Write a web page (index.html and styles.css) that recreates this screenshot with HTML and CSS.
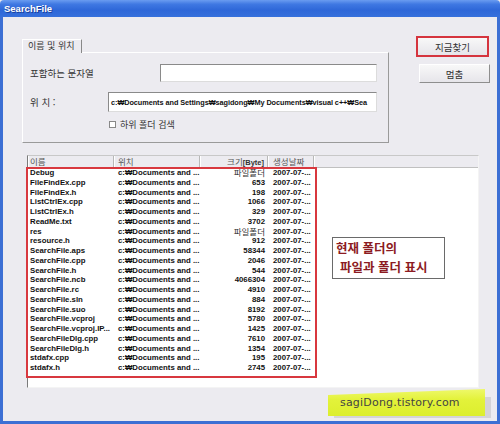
FILE: index.html
```html
<!DOCTYPE html>
<html lang="ko">
<head>
<meta charset="utf-8">
<title>SearchFile</title>
<link rel="stylesheet" href="styles.css">
</head>
<body>
<div class="window">
  <div class="titlebar"><span class="title">SearchFile</span></div>
  <div class="client">
    <div class="top">
      <div class="tabgroup">
        <div class="tabs"><div class="tab">이름 및 위치</div></div>
        <div class="panel">
          <div class="row row1">
            <span class="label">포함하는 문자열</span>
            <div class="input input1"></div>
          </div>
          <div class="row row2">
            <span class="label">위 치 :</span>
            <div class="input input2"><span class="path">c:₩Documents and Settings₩sagidong₩My Documents₩visual c++₩Sea</span></div>
          </div>
          <div class="row row3">
            <span class="check"></span><span class="label">하위 폴더 검색</span>
          </div>
        </div>
      </div>
      <div class="buttons">
        <div class="btn btn-find">지금찾기</div>
        <div class="btn btn-stop">멈춤</div>
      </div>
    </div>

    <div class="list">
      <div class="header">
        <div class="hcell c-name">이름</div>
        <div class="hcell c-loc">위치</div>
        <div class="hcell c-size">크기<b>[Byte]</b></div>
        <div class="hcell c-date">생성날짜</div>
        <div class="hcell c-rest"></div>
      </div>
      <div class="rows">
        <div class="r"><span class="c-name">Debug</span><span class="c-loc">c:₩Documents and ...</span><span class="c-size ko">파일폴더</span><span class="c-date">2007-07-...</span></div>
        <div class="r"><span class="c-name">FileFindEx.cpp</span><span class="c-loc">c:₩Documents and ...</span><span class="c-size">653</span><span class="c-date">2007-07-...</span></div>
        <div class="r"><span class="c-name">FileFindEx.h</span><span class="c-loc">c:₩Documents and ...</span><span class="c-size">198</span><span class="c-date">2007-07-...</span></div>
        <div class="r"><span class="c-name">ListCtrlEx.cpp</span><span class="c-loc">c:₩Documents and ...</span><span class="c-size">1066</span><span class="c-date">2007-07-...</span></div>
        <div class="r"><span class="c-name">ListCtrlEx.h</span><span class="c-loc">c:₩Documents and ...</span><span class="c-size">329</span><span class="c-date">2007-07-...</span></div>
        <div class="r"><span class="c-name">ReadMe.txt</span><span class="c-loc">c:₩Documents and ...</span><span class="c-size">3702</span><span class="c-date">2007-07-...</span></div>
        <div class="r"><span class="c-name">res</span><span class="c-loc">c:₩Documents and ...</span><span class="c-size ko">파일폴더</span><span class="c-date">2007-07-...</span></div>
        <div class="r"><span class="c-name">resource.h</span><span class="c-loc">c:₩Documents and ...</span><span class="c-size">912</span><span class="c-date">2007-07-...</span></div>
        <div class="r"><span class="c-name">SearchFile.aps</span><span class="c-loc">c:₩Documents and ...</span><span class="c-size">58344</span><span class="c-date">2007-07-...</span></div>
        <div class="r"><span class="c-name">SearchFile.cpp</span><span class="c-loc">c:₩Documents and ...</span><span class="c-size">2046</span><span class="c-date">2007-07-...</span></div>
        <div class="r"><span class="c-name">SearchFile.h</span><span class="c-loc">c:₩Documents and ...</span><span class="c-size">544</span><span class="c-date">2007-07-...</span></div>
        <div class="r"><span class="c-name">SearchFile.ncb</span><span class="c-loc">c:₩Documents and ...</span><span class="c-size">4066304</span><span class="c-date">2007-07-...</span></div>
        <div class="r"><span class="c-name">SearchFile.rc</span><span class="c-loc">c:₩Documents and ...</span><span class="c-size">4910</span><span class="c-date">2007-07-...</span></div>
        <div class="r"><span class="c-name">SearchFile.sln</span><span class="c-loc">c:₩Documents and ...</span><span class="c-size">884</span><span class="c-date">2007-07-...</span></div>
        <div class="r"><span class="c-name">SearchFile.suo</span><span class="c-loc">c:₩Documents and ...</span><span class="c-size">8192</span><span class="c-date">2007-07-...</span></div>
        <div class="r"><span class="c-name">SearchFile.vcproj</span><span class="c-loc">c:₩Documents and ...</span><span class="c-size">5780</span><span class="c-date">2007-07-...</span></div>
        <div class="r"><span class="c-name">SearchFile.vcproj.IP...</span><span class="c-loc">c:₩Documents and ...</span><span class="c-size">1425</span><span class="c-date">2007-07-...</span></div>
        <div class="r"><span class="c-name">SearchFileDlg.cpp</span><span class="c-loc">c:₩Documents and ...</span><span class="c-size">7610</span><span class="c-date">2007-07-...</span></div>
        <div class="r"><span class="c-name">SearchFileDlg.h</span><span class="c-loc">c:₩Documents and ...</span><span class="c-size">1354</span><span class="c-date">2007-07-...</span></div>
        <div class="r"><span class="c-name">stdafx.cpp</span><span class="c-loc">c:₩Documents and ...</span><span class="c-size">195</span><span class="c-date">2007-07-...</span></div>
        <div class="r"><span class="c-name">stdafx.h</span><span class="c-loc">c:₩Documents and ...</span><span class="c-size">2745</span><span class="c-date">2007-07-...</span></div>
      </div>
    </div>

    <div class="redmark"></div>
    <div class="note"><div class="l1">현재 폴더의</div><div class="l2">파일과 폴더 표시</div></div>
    <div class="watermark"><div class="wm-shadow"></div><div class="wm-hl"></div><span class="wm-text">sagiDong.tistory.com</span></div>
  </div>
</div>
</body>
</html>
```

FILE: styles.css
```css
* { box-sizing: border-box; }
html, body { margin: 0; padding: 0; }
body {
  width: 500px; height: 424px; overflow: hidden;
  font-family: "Liberation Sans", Arial, "Noto Sans CJK KR", sans-serif;
  background: #ece9ed;
}
.window { width: 500px; height: 424px; display: flex; flex-direction: column; }
.titlebar {
  height: 17px; flex: none;
  background: linear-gradient(#6a9cf0 0%, #3f78e2 25%, #2e67d8 60%, #3670dc 100%);
  border-radius: 4px 4px 0 0;
  display: flex; align-items: center; padding-left: 4px;
}
.title { color: #fff; font-weight: bold; font-size: 9.5px; text-shadow: 1px 1px 0 #1a3f9a; }
.client {
  flex: 1; position: relative;
  background: #ecebf0;
  border-left: 3px solid #3c6fd4;
  border-right: 3px solid #3c6fd4;
  border-bottom: 3px solid #3c6fd4;
}
.top { display: flex; align-items: flex-start; }
.tabgroup { margin-left: 19px; margin-top: 22px; width: 367px; }
.tabs { height: 13px; display: flex; }
.tab {
  font-family: "Noto Sans CJK KR", sans-serif; font-size: 9px; color: #333;
  height: 14px; line-height: 12px; padding: 0 5px 0 5px;
  border-left: 1px solid #fff; border-top: 1px solid #fff; border-right: 1px solid #888;
  background: #ecebf0; position: relative; z-index: 1; width: 60px;
}
.panel {
  height: 91px;
  border-top: 1px solid #fff; border-left: 1px solid #fff;
  border-right: 1px solid #9a9a9a; border-bottom: 1px solid #9a9a9a;
  padding: 11px 11px 0 7px;
}
.row { display: flex; align-items: center; justify-content: space-between; }
.label { font-family: "Noto Sans CJK KR", sans-serif; font-size: 9.5px; color: #333; }
.row1 { height: 18px; }
.row2 { height: 20px; margin-top: 10px; }
.input {
  background: #fff;
  border-top: 1px solid #8a8a8a; border-left: 1px solid #8a8a8a;
  border-right: 1px solid #dcdcdc; border-bottom: 1px solid #dcdcdc;
}
.input1 { width: 217px; height: 18px; }
.input2 { width: 269px; height: 20px; white-space: nowrap; padding: 0 2px; display: flex; align-items: center; }
.path { font-weight: bold; font-size: 7.3px; color: #111; letter-spacing: -0.05px; }
.row3 { justify-content: flex-start; margin-top: 6px; padding-left: 79px; height: 12px; }
.check { width: 7px; height: 7px; border: 1px solid #888; background: #fff; margin-right: 4px; }
.row3 .label { font-size: 9px; }
.buttons { margin-left: 27px; margin-top: 19px; display: flex; flex-direction: column; align-items: flex-end; width: 74px; }
.btn {
  font-family: "Noto Sans CJK KR", sans-serif; font-size: 9.5px; color: #333;
  display: flex; align-items: center; justify-content: center;
  background: linear-gradient(#f8f8f8, #e6e5ea);
}
.btn-find { width: 73px; height: 21px; border: 2px solid #d5343e; align-self: flex-start; }
.btn-stop {
  width: 71px; height: 19px; margin-top: 7px;
  border-top: 1px solid #fff; border-left: 1px solid #fff;
  border-right: 1px solid #8e8e8e; border-bottom: 1px solid #8e8e8e;
}
.list {
  margin-left: 24px; margin-top: 12px;
  width: 452px; height: 233px;
  background: #fff;
  border-left: 1px solid #7a7a7a; border-top: 1px solid #c8c8c8;
  border-right: 1px solid #f4f4f4; border-bottom: 1px solid #f4f4f4;
  display: flex; flex-direction: column;
}
.header { display: flex; height: 12px; flex: none; background: #ecebf0; border-bottom: 1px solid #c0c0c0; }
.hcell {
  font-family: "Noto Sans CJK KR", sans-serif; font-size: 8.5px; color: #555;
  line-height: 11px; border-right: 1px solid #b8b8b8; box-shadow: inset 1px 0 0 #fff;
  white-space: nowrap;
}
.hcell b { font-family: "Liberation Sans", Arial, sans-serif; font-size: 7.5px; color: #333; }
.c-name { width: 86px; padding-left: 2px; }
.c-loc { width: 86px; padding-left: 4px; }
.c-size { width: 68px; text-align: right; padding-right: 3px; }
.c-date { width: 46px; padding-left: 5px; }
.c-rest { flex: 1; border-right: none; }
.r { display: flex; height: 9.75px; align-items: center; font-weight: bold; font-size: 7.8px; color: #111; white-space: nowrap; }
.r span { display: block; line-height: 9.75px; }
.r .ko { font-family: "Noto Sans CJK KR", sans-serif; font-weight: normal; font-size: 8.5px; color: #333; }
.redmark {
  position: absolute; left: 23px; top: 150px; width: 291px; height: 211px;
  border: 2px solid #d8383f;
}
.note {
  position: absolute; left: 329px; top: 220px; width: 113px; height: 42px;
  background: #fff; border: 1px solid #6a6a6a;
  font-family: "Noto Sans CJK KR", sans-serif; font-weight: bold; font-size: 12.5px; color: #8c1b22;
  line-height: 19px; padding-top: 0;
}
.note .l1 { padding-left: 3px; }
.note .l2 { padding-left: 7px; }
.watermark { position: absolute; left: 325px; top: 372px; width: 160px; height: 30px; }
.wm-shadow { position: absolute; left: 6px; top: 8px; width: 157px; height: 21px; background: #d4d3d8; }
.wm-hl {
  position: absolute; left: 0; top: 0; width: 157px; height: 27px;
  background: linear-gradient(#eef86a, #e3f23a 40%, #dcee2e);
  clip-path: polygon(0 6px, 100% 0, 100% 100%, 0 100%);
}
.wm-text {
  position: absolute; left: 12px; top: 7px;
  font-family: "DejaVu Sans", sans-serif; font-size: 11px; color: #444; letter-spacing: 0.2px;
}
```
